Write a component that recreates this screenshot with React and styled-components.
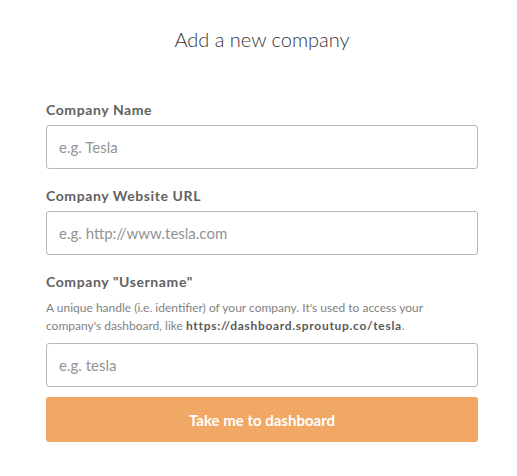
import React from "react";
import styled, { createGlobalStyle } from "styled-components";

const GlobalStyle = createGlobalStyle`
  html, body {
    margin: 0;
    padding: 0;
    background: #fff;
  }
  body {
    font-family: Lato, "Open Sans", sans-serif;
  }
  * {
    box-sizing: border-box;
  }
`;

const Page = styled.div`
  width: 517px;
  padding: 25px 39px 0 46px;
`;

const Title = styled.h1`
  margin: 0 0 47px;
  font-size: 20px;
  line-height: 28px;
  font-weight: 300;
  color: #333;
  text-align: center;
`;

const Form = styled.form`
  display: flex;
  flex-direction: column;
`;

const Field = styled.div`
  display: flex;
  flex-direction: column;
  margin-bottom: ${(p) => (p.last ? "10px" : "17px")};
`;

const Label = styled.label`
  font-size: 14px;
  line-height: 20px;
  font-weight: 700;
  letter-spacing: 0.6px;
  color: #616161;
  margin-bottom: 5px;
`;

const Hint = styled.p`
  margin: 2px 0 8px;
  font-size: 12px;
  line-height: 18px;
  color: #828282;
  b {
    color: #5a5a5a;
    font-weight: 700;
    letter-spacing: 0.7px;
  }
`;

const Input = styled.input`
  height: 44px;
  width: 100%;
  padding: 0 12px;
  border: 1px solid #b8b8b8;
  border-radius: 3px;
  font-family: Lato, "Open Sans", sans-serif;
  font-size: 15px;
  color: #333;
  outline: none;
  &::placeholder {
    color: #939393;
  }
`;

const Button = styled.button`
  height: 45px;
  width: 100%;
  border: none;
  border-radius: 3px;
  background: #f1a865;
  color: #fff;
  font-family: Lato, "Open Sans", sans-serif;
  font-size: 15px;
  font-weight: 700;
  cursor: pointer;
`;

export default function App() {
  return (
    <Page>
      <GlobalStyle />
      <Title>Add a new company</Title>
      <Form onSubmit={(e) => e.preventDefault()}>
        <Field>
          <Label>Company Name</Label>
          <Input placeholder="e.g. Tesla" />
        </Field>
        <Field>
          <Label>Company Website URL</Label>
          <Input placeholder="e.g. http://www.tesla.com" />
        </Field>
        <Field last>
          <Label>Company "Username"</Label>
          <Hint>
            A unique handle (i.e. identifier) of your company. It's used to
            access your company's dashboard, like{" "}
            <b>https://dashboard.sproutup.co/tesla</b>.
          </Hint>
          <Input placeholder="e.g. tesla" />
        </Field>
        <Button type="submit">Take me to dashboard</Button>
      </Form>
    </Page>
  );
}
